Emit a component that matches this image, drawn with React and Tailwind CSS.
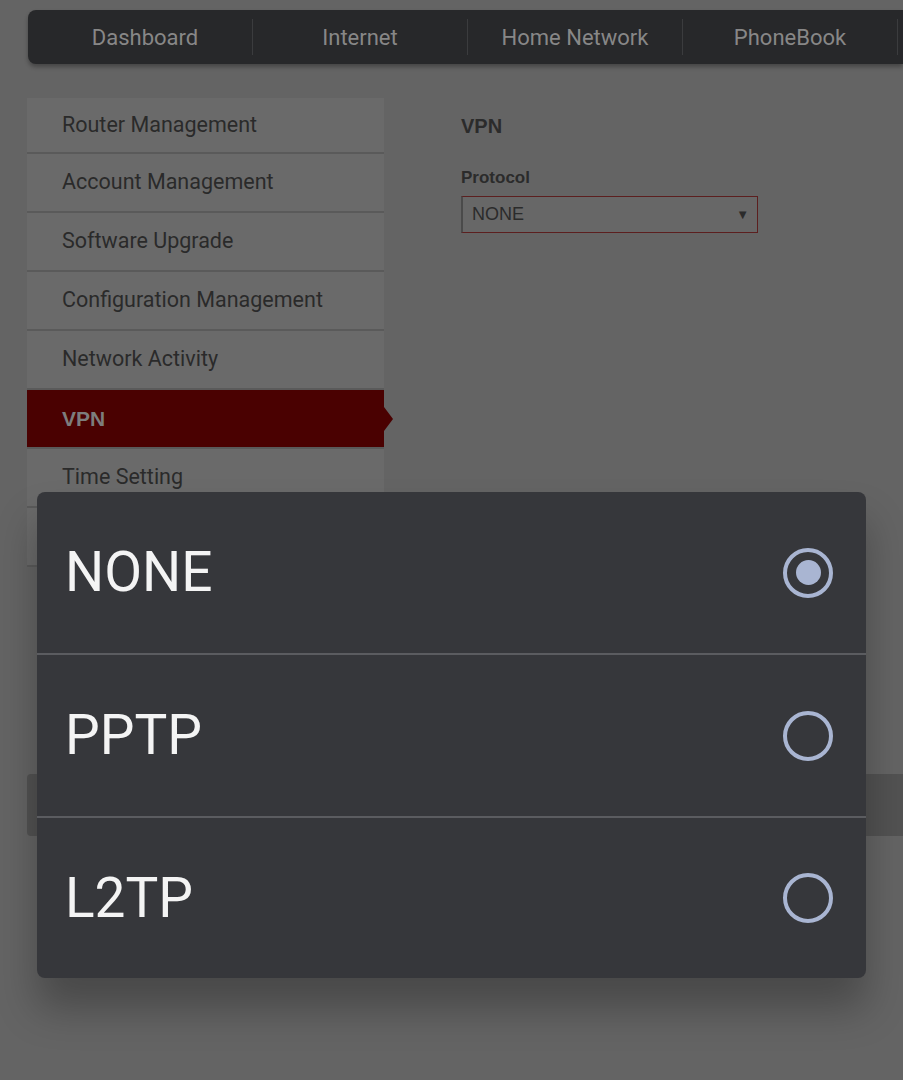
const tabs = ["Dashboard", "Internet", "Home Network", "PhoneBook", ""];

const menu = [
  "Router Management",
  "Account Management",
  "Software Upgrade",
  "Configuration Management",
  "Network Activity",
  "VPN",
  "Time Setting",
  "",
];

const options = [
  { label: "NONE", checked: true },
  { label: "PPTP", checked: false },
  { label: "L2TP", checked: false },
];

const Radio = ({ checked }) => (
  <div className="w-[50px] h-[50px] rounded-full border-[4px] border-[#a9b5d2] flex items-center justify-center">
    {checked && <div className="w-[25px] h-[25px] rounded-full bg-[#a9b5d2]" />}
  </div>
);

export default function App() {
  return (
    <div className="relative min-h-[1080px] w-full overflow-hidden bg-[#646464] font-['Roboto',sans-serif] pt-[10px]">
      {/* top nav */}
      <div className="ml-[28px] h-[54px] bg-[#27282a] rounded-l-[8px] flex items-center pl-[10px] shadow-[0_3px_4px_rgba(0,0,0,0.3)] overflow-hidden">
        {tabs.map((t, i) => (
          <div
            key={i}
            className="w-[215px] shrink-0 h-[36px] border-r border-[#3b3c3e] flex items-center justify-center text-[22px] text-[#878787]"
          >
            {t}
          </div>
        ))}
      </div>

      <div className="flex mt-[34px]">
        {/* side menu */}
        <div className="ml-[27px] w-[357px] shrink-0">
          {menu.map((m, i) =>
            m === "VPN" ? (
              <div key={m} className="relative h-[59px] bg-[#4a0101] border-b-2 border-[#5a5a5a] flex items-center pl-[35px] text-[21px] font-bold text-[#7d7d7d] font-['Liberation_Sans',sans-serif]">
                {m}
                <div className="absolute right-[-9px] top-[17px] w-0 h-0 border-y-[12px] border-y-transparent border-l-[9px] border-l-[#4a0101]" />
              </div>
            ) : (
              <div
                key={m || "empty"}
                className={
                  i === 0
                    ? "h-[56px] bg-[#6a6a6a] border-b-2 border-[#5a5a5a] flex items-center pl-[35px] text-[21.5px] text-[#2a2a2a]"
                    : "h-[59px] bg-[#6a6a6a] border-b-2 border-[#5a5a5a] flex items-center pl-[35px] text-[21.5px] text-[#2a2a2a]"
                }
              >
                {m}
              </div>
            )
          )}
        </div>

        {/* content */}
        <div className="ml-[77px] pt-[16px] font-['Liberation_Sans',sans-serif]">
          <div className="text-[20px] font-bold text-[#2b2b2b] leading-[24px]">VPN</div>
          <div className="mt-[30px] text-[17px] font-bold text-[#2b2b2b] leading-[20px]">Protocol</div>
          <div className="mt-[8px] w-[297px] h-[37px] bg-[#676767] border border-[#5c1f1f] border-l-[#4a4a4a] border-l-2 flex items-center justify-between pl-[9px] pr-[8px] text-[18px] text-[#2b2b2b]">
            <span>NONE</span>
            <span className="text-[13px]">▼</span>
          </div>
        </div>
      </div>

      {/* button bar behind the dialog */}
      <div className="mt-[207px] ml-[27px] h-[62px] bg-[#525252] rounded-l-[4px]" />

      {/* selection dialog */}
      <div className="absolute left-[37px] top-[492px] w-[829px] bg-[#36373b] rounded-[8px] overflow-hidden shadow-[0_30px_40px_rgba(0,0,0,0.28)]">
        {options.map((o, i) => (
          <div
            key={o.label}
            className={
              i < options.length - 1
                ? "h-[163px] border-b-2 border-[#5b5c60] flex items-center justify-between pl-[28px] pr-[33px]"
                : "h-[160px] flex items-center justify-between pl-[28px] pr-[33px]"
            }
          >
            <span className="text-[55px] text-[#f4f4f4] leading-none">{o.label}</span>
            <Radio checked={o.checked} />
          </div>
        ))}
      </div>
    </div>
  );
}
